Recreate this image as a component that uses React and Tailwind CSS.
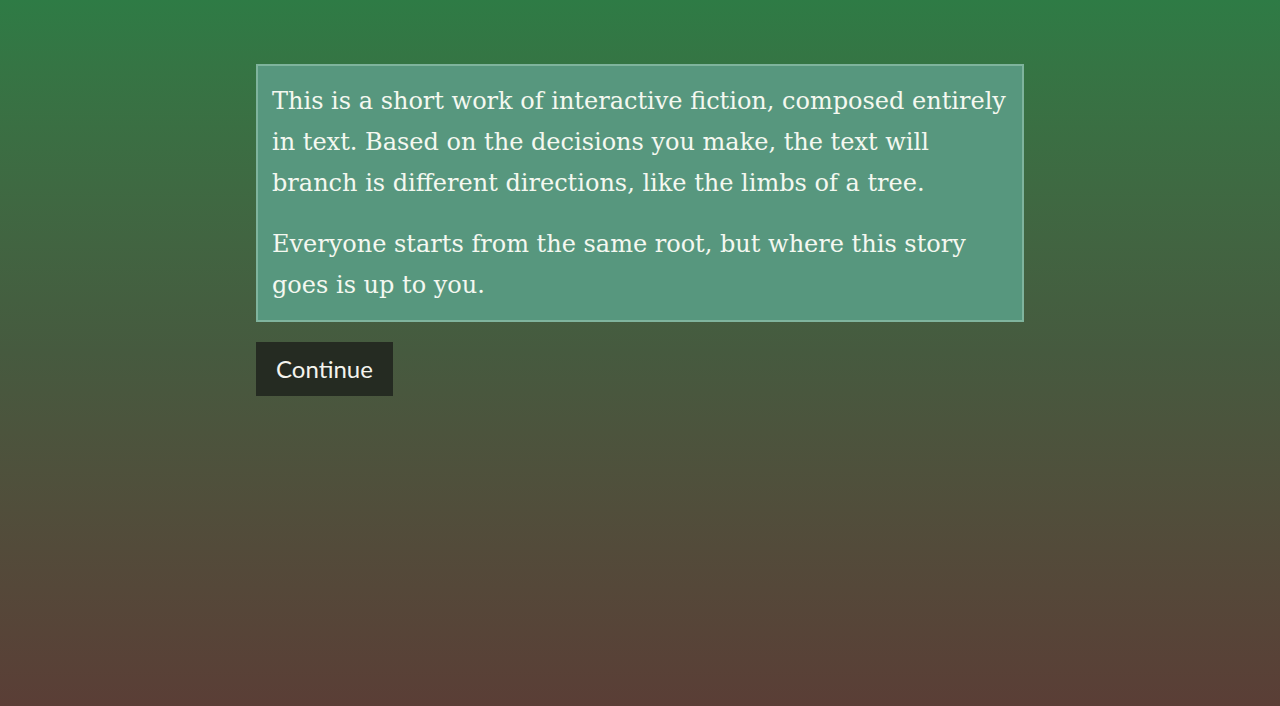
import React from "react";

const App = () => {
  return (
    <div className="min-h-screen w-full bg-gradient-to-b from-[#2e7b45] via-[#465a3f] to-[#5a3e36] pt-16">
      <div className="mx-auto w-[768px]">
        <div
          className="border-2 border-[#7fb49d] bg-[#57977e] px-[14px] pt-[15px] pb-[14px] text-[24px] leading-[41px] text-[#f4f8f0]"
          style={{ fontFamily: '"DejaVu Serif", serif' }}
        >
          <p>
            This is a short work of interactive fiction, composed entirely
            <br />
            in text. Based on the decisions you make, the text will
            <br />
            branch is different directions, like the limbs of a tree.
          </p>
          <p className="mt-5">
            Everyone starts from the same root, but where this story
            <br />
            goes is up to you.
          </p>
        </div>
        <button
          className="mt-5 h-[54px] w-[137px] bg-[#252b22] text-[24px] text-[#f4f4ee]"
          style={{ fontFamily: 'Lato, sans-serif' }}
        >
          Continue
        </button>
      </div>
    </div>
  );
};

export default App;
